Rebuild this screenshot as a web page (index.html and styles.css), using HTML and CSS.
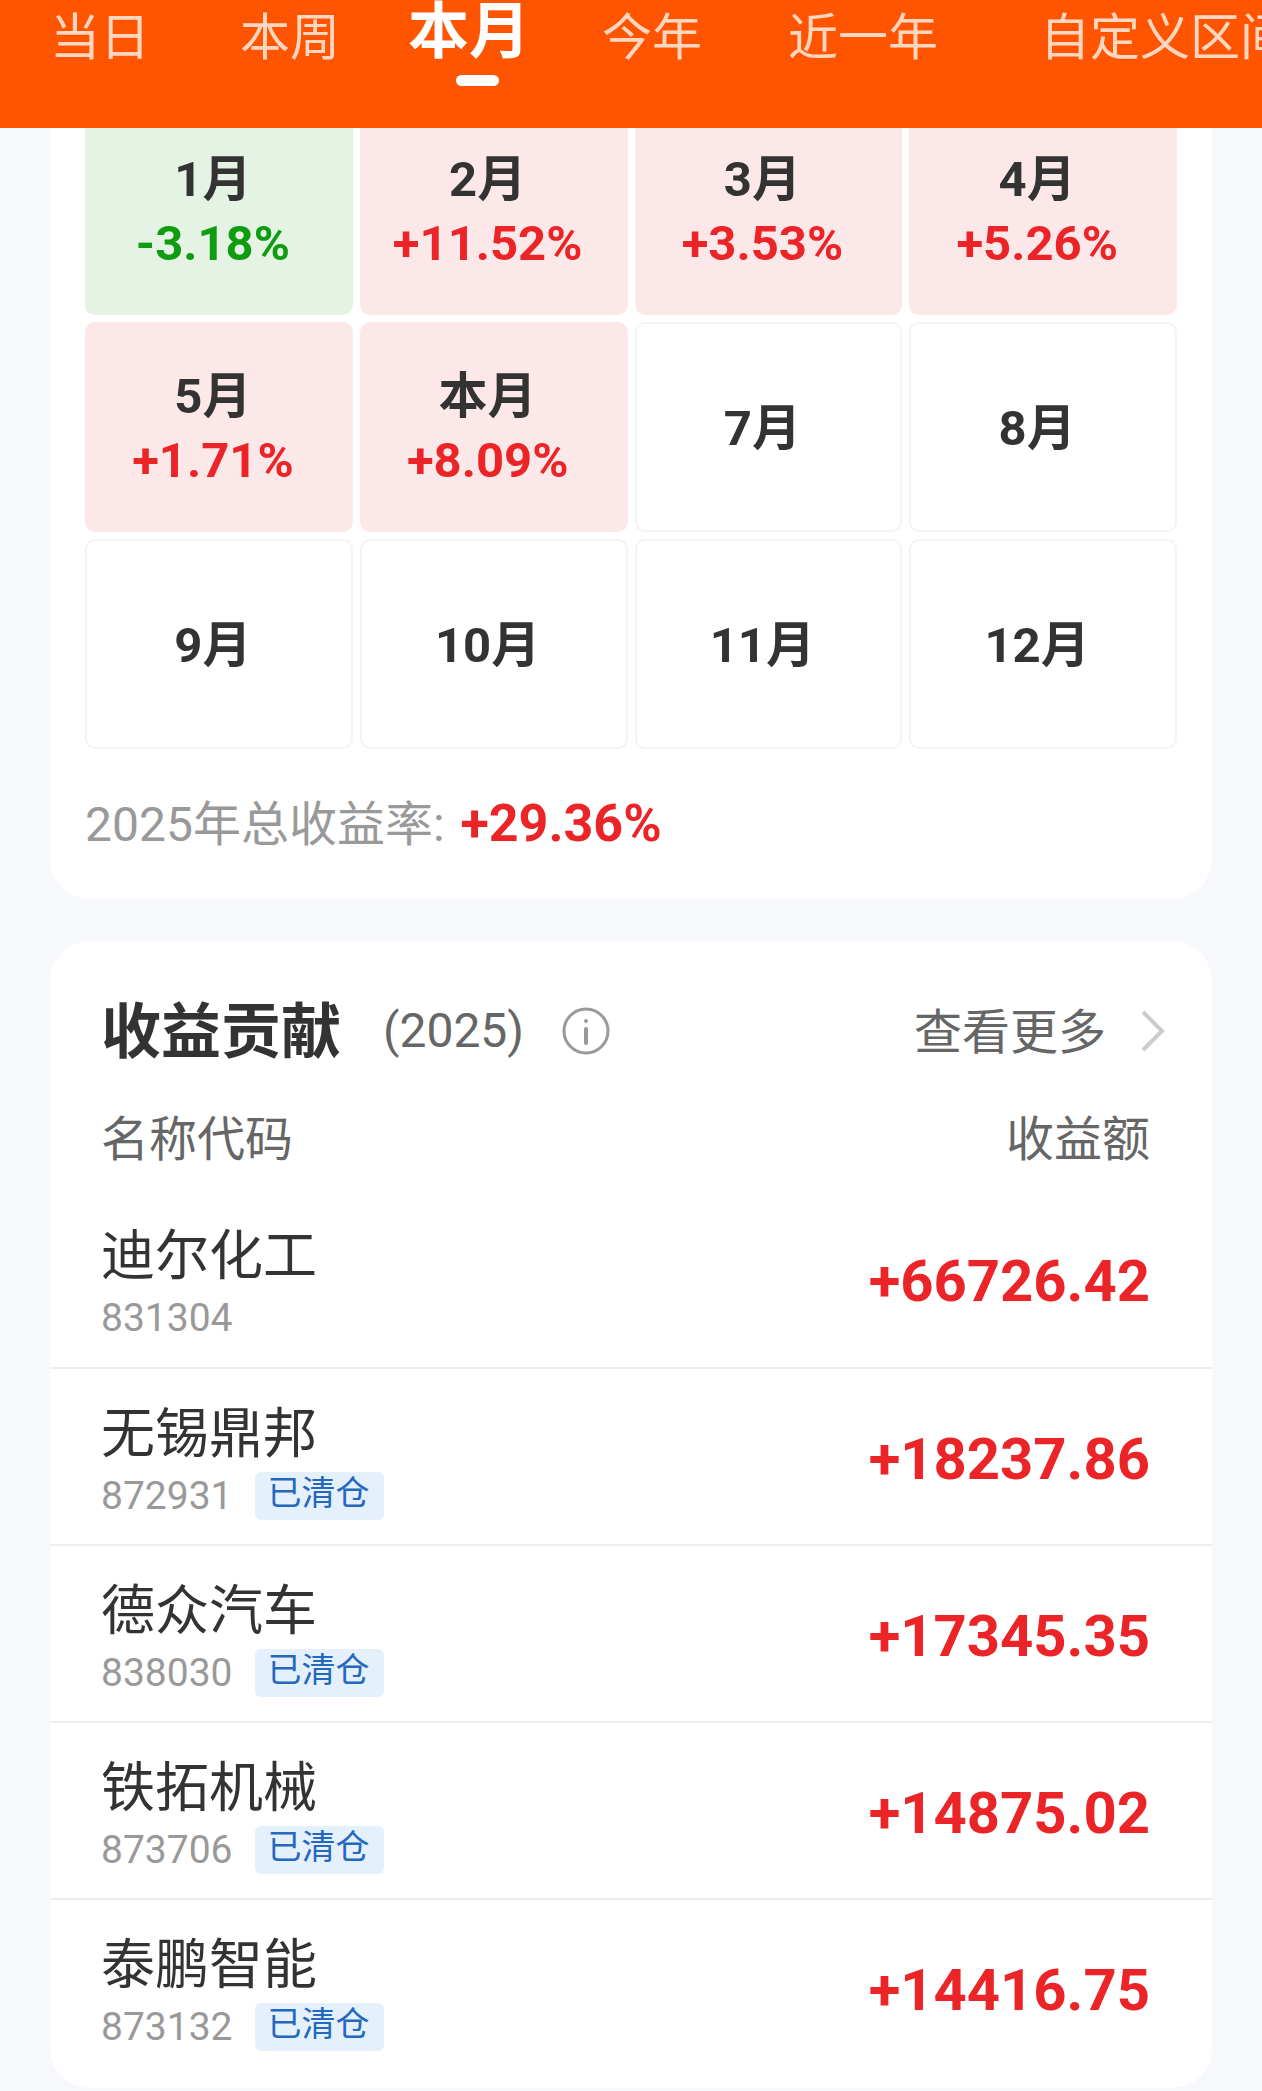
FILE: index.html
```html
<!DOCTYPE html>
<html lang="zh-CN">
<head>
    <meta charset="utf-8">
    <meta name="viewport" content="width=device-width, initial-scale=1">
    <title>收益分析</title>
    <link rel="stylesheet" href="styles.css">
</head>
<body>
    <nav class="tabs">
        <button class="tab" type="button">当日</button>
        <button class="tab" type="button">本周</button>
        <button class="tab active" type="button">本月</button>
        <button class="tab" type="button">今年</button>
        <button class="tab" type="button">近一年</button>
        <button class="tab" type="button">自定义区间</button>
    </nav>
    <main>
        <section class="card calendar">
            <div class="months">
                <div class="month down"><span>1月</span><span class="rate">-3.18%</span></div>
                <div class="month up"><span>2月</span><span class="rate">+11.52%</span></div>
                <div class="month up"><span>3月</span><span class="rate">+3.53%</span></div>
                <div class="month up"><span>4月</span><span class="rate">+5.26%</span></div>
                <div class="month up"><span>5月</span><span class="rate">+1.71%</span></div>
                <div class="month up"><span>本月</span><span class="rate">+8.09%</span></div>
                <div class="month"><span>7月</span></div>
                <div class="month"><span>8月</span></div>
                <div class="month"><span>9月</span></div>
                <div class="month"><span>10月</span></div>
                <div class="month"><span>11月</span></div>
                <div class="month"><span>12月</span></div>
            </div>
            <p class="total">2025年总收益率: <strong>+29.36%</strong></p>
        </section>
        <section class="card contribution">
            <div class="head">
                <h2>收益贡献</h2>
                <span class="year">(2025)</span>
                <button class="info" type="button" aria-label="说明">
                    <svg width="48" height="48" viewBox="0 0 48 48" fill="none" stroke="#999" stroke-width="3">
                        <circle cx="24" cy="24" r="22"/>
                        <path d="M24 22v14" stroke-width="4" stroke-linecap="round"/>
                        <circle cx="24" cy="14" r="2" fill="#999" stroke="none"/>
                    </svg>
                </button>
                <a class="more" href="#"><span>查看更多</span>
                    <svg width="26" height="44" viewBox="0 0 26 44" fill="none" stroke="#ccc" stroke-width="4">
                        <path d="M3 3l19 19L3 41"/>
                    </svg>
                </a>
            </div>
            <table>
                <thead>
                    <tr><th>名称代码</th><th class="amount">收益额</th></tr>
                </thead>
                <tbody>
                    <tr>
                        <td><div class="name">迪尔化工</div><div class="code">831304</div></td>
                        <td class="amount">+66726.42</td>
                    </tr>
                    <tr>
                        <td><div class="name">无锡鼎邦</div><div class="code">872931<span class="tag">已清仓</span></div></td>
                        <td class="amount">+18237.86</td>
                    </tr>
                    <tr>
                        <td><div class="name">德众汽车</div><div class="code">838030<span class="tag">已清仓</span></div></td>
                        <td class="amount">+17345.35</td>
                    </tr>
                    <tr>
                        <td><div class="name">铁拓机械</div><div class="code">873706<span class="tag">已清仓</span></div></td>
                        <td class="amount">+14875.02</td>
                    </tr>
                    <tr>
                        <td><div class="name">泰鹏智能</div><div class="code">873132<span class="tag">已清仓</span></div></td>
                        <td class="amount">+14416.75</td>
                    </tr>
                </tbody>
            </table>
        </section>
    </main>
</body>
</html>
```
FILE: styles.css
```css
* {
    box-sizing: border-box;
}

body {
    margin: 0;
    background: #f6f8fb;
    color: #333;
    font-family: Roboto, "Noto Sans CJK SC", sans-serif;
    font-size: 48px;
}

button {
    padding: 0;
    border: 0;
    background: none;
    font-family: inherit;
}

/* top tabs */
.tabs {
    position: sticky;
    top: 0;
    z-index: 1;
    display: grid;
    grid-template-columns: 190px 168px 194px 186px 252px max-content;
    align-items: start;
    height: 128px;
    padding-left: 50px;
    overflow: hidden;
    background: #ff5400;
}

.tab {
    color: #ffd6c0;
    font-size: 50px;
    line-height: 76px;
    text-align: left;
    white-space: nowrap;
}

.tab.active {
    color: #fff;
    font-size: 61px;
    font-weight: bold;
    line-height: 64px;
}

.tab.active::after {
    content: "";
    display: block;
    width: 43px;
    height: 11px;
    margin: 11px 0 0 48px;
    border-radius: 6px;
    background: #fff;
}

.card {
    margin: 0 50px 42px;
    border-radius: 40px;
    background: #fff;
}

/* the calendar is scrolled partly under the tabs */
.calendar {
    margin-top: -48px;
    padding: 25px 35px 0;
}

.months {
    display: grid;
    grid-template-columns: repeat(4, 1fr);
    gap: 7px;
}

.month {
    display: flex;
    flex-direction: column;
    align-items: center;
    justify-content: center;
    height: 210px;
    padding: 4px 12px 0 0;
    border: 2px solid #f4f4f4;
    border-radius: 10px;
    font-size: 49px;
    font-weight: bold;
    line-height: 64px;
}

.month.up {
    border-color: #fde8e9;
    background: #fde8e9;
}

.month.down {
    border-color: #e4f3e4;
    background: #e4f3e4;
}

.up .rate,
.total strong,
td.amount {
    color: #eb2428;
}

.down .rate {
    color: #109c10;
}

.total {
    margin: 0;
    color: #999;
    line-height: 149px;
}

.total strong {
    margin-left: 4px;
    font-size: 52px;
}

/* contribution list */
.contribution {
    margin-bottom: 4px;
    padding-bottom: 12px;
}

.head {
    display: flex;
    align-items: center;
    padding: 36px 46px 0 51px;
    line-height: 107px;
}

h2,
.more span {
    margin: 0;
    padding-top: 4px;
    line-height: 103px;
}

h2 {
    font-size: 60px;
}

.year {
    margin: 0 38px 0 42px;
    color: #666;
}

.info svg {
    display: block;
}

.more {
    display: flex;
    align-items: center;
    gap: 34px;
    margin-left: auto;
    color: #666;
    text-decoration: none;
}

table {
    width: 100%;
    border-collapse: collapse;
}

th,
td {
    padding: 4px 51px 0;
    text-align: left;
}

th {
    color: #666;
    font-weight: normal;
    line-height: 103px;
}

td {
    height: 177px;
}

tbody tr + tr {
    border-top: 2px solid #eee;
}

th.amount,
td.amount {
    padding-right: 62px;
    text-align: right;
}

td.amount {
    font-size: 58px;
    font-weight: bold;
}

.name {
    font-size: 54px;
    line-height: 74px;
}

.code {
    display: flex;
    align-items: center;
    color: #999;
    font-size: 39px;
    line-height: 48px;
}

.tag {
    height: 48px;
    margin-left: 22px;
    padding: 0 14px 0 13px;
    border-radius: 6px;
    background: #e4f0fb;
    color: #2468c0;
    font-size: 34px;
    line-height: 42px;
}
```
